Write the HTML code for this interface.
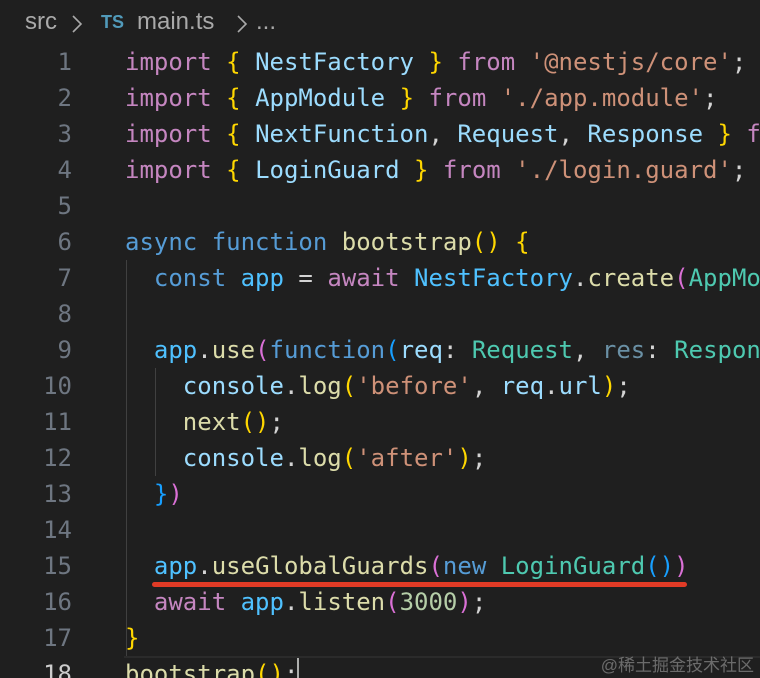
<!DOCTYPE html>
<html><head><meta charset="utf-8"><style>
html,body{margin:0;padding:0;background:#1f1f1f;width:760px;height:678px;overflow:hidden;position:relative}
.bc{position:absolute;top:8px;font:24px "Liberation Sans",sans-serif;color:#a9a9a9;white-space:pre}
.ts{position:absolute;left:101px;top:12px;color:#519aba;font:bold 18px "Liberation Sans",sans-serif}
.ln{position:absolute;left:0;width:72px;text-align:right;font:24px "DejaVu Sans Mono",monospace;color:#6e7681;line-height:36px}
.cl{position:absolute;left:125px;font:24px "DejaVu Sans Mono",monospace;color:#d4d4d4;line-height:36px;white-space:pre;width:635px;overflow:hidden}
.k{color:#c586c0}.b{color:#ffd700}.p{color:#da70d6}.u{color:#179fff}
.v{color:#9cdcfe}.s{color:#ce9178}.f{color:#dcdcaa}.kw{color:#569cd6}.t{color:#4ec9b0}.n{color:#b5cea8}.d{color:#9cdcfe;opacity:.6}
.g{position:absolute;width:1px;background:#404040}
</style></head><body>
<div class="bc" style="left:25px">src</div>
<svg style="position:absolute;left:70px;top:13px" width="14" height="22"><path d="M3 3 L11 11 L3 19" fill="none" stroke="#a9a9a9" stroke-width="1.6"/></svg>
<div class="ts">TS</div>
<div class="bc" style="left:137px">main.ts</div>
<svg style="position:absolute;left:235px;top:13px" width="14" height="22"><path d="M3 3 L11 11 L3 19" fill="none" stroke="#a9a9a9" stroke-width="1.6"/></svg>
<div class="bc" style="left:256px">...</div>

<div class="g" style="left:126px;top:260px;height:396px"></div>
<div class="g" style="left:155px;top:368px;height:108px"></div>
<div style="position:absolute;left:124px;top:656px;width:636px;height:22px;border-top:2px solid #2b2b2b"></div>

<div class="ln" style="top:44px">1</div>
<div class="ln" style="top:80px">2</div>
<div class="ln" style="top:116px">3</div>
<div class="ln" style="top:152px">4</div>
<div class="ln" style="top:188px">5</div>
<div class="ln" style="top:224px">6</div>
<div class="ln" style="top:260px">7</div>
<div class="ln" style="top:296px">8</div>
<div class="ln" style="top:332px">9</div>
<div class="ln" style="top:368px">10</div>
<div class="ln" style="top:404px">11</div>
<div class="ln" style="top:440px">12</div>
<div class="ln" style="top:476px">13</div>
<div class="ln" style="top:512px">14</div>
<div class="ln" style="top:548px">15</div>
<div class="ln" style="top:584px">16</div>
<div class="ln" style="top:620px">17</div>
<div class="ln" style="top:656px;color:#ccc">18</div>

<div class="cl" style="top:44px"><span class="k">import</span> <span class="b">{</span> <span class="v">NestFactory</span> <span class="b">}</span> <span class="k">from</span> <span class="s">'@nestjs/core'</span>;</div>
<div class="cl" style="top:80px"><span class="k">import</span> <span class="b">{</span> <span class="v">AppModule</span> <span class="b">}</span> <span class="k">from</span> <span class="s">'./app.module'</span>;</div>
<div class="cl" style="top:116px"><span class="k">import</span> <span class="b">{</span> <span class="v">NextFunction</span>, <span class="v">Request</span>, <span class="v">Response</span> <span class="b">}</span> <span class="k">from</span></div>
<div class="cl" style="top:152px"><span class="k">import</span> <span class="b">{</span> <span class="v">LoginGuard</span> <span class="b">}</span> <span class="k">from</span> <span class="s">'./login.guard'</span>;</div>
<div class="cl" style="top:224px"><span class="kw">async</span> <span class="kw">function</span> <span class="f">bootstrap</span><span class="b">()</span> <span class="b">{</span></div>
<div class="cl" style="top:260px">  <span class="kw">const</span> <span class="v" style="color:#4fc1ff">app</span> = <span class="k">await</span> <span class="v" style="color:#4fc1ff">NestFactory</span>.<span class="f">create</span><span class="p">(</span><span class="t">AppModule</span></div>
<div class="cl" style="top:332px">  <span class="v" style="color:#4fc1ff">app</span>.<span class="f">use</span><span class="p">(</span><span class="kw">function</span><span class="u">(</span><span class="v">req</span>: <span class="t">Request</span>, <span class="d">res</span>: <span class="t">Response</span></div>
<div class="cl" style="top:368px">    <span class="v">console</span>.<span class="f">log</span><span class="b">(</span><span class="s">'before'</span>, <span class="v">req</span>.<span class="v">url</span><span class="b">)</span>;</div>
<div class="cl" style="top:404px">    <span class="f">next</span><span class="b">()</span>;</div>
<div class="cl" style="top:440px">    <span class="v">console</span>.<span class="f">log</span><span class="b">(</span><span class="s">'after'</span><span class="b">)</span>;</div>
<div class="cl" style="top:476px">  <span class="u">}</span><span class="p">)</span></div>
<div class="cl" style="top:548px">  <span class="v" style="color:#4fc1ff">app</span>.<span class="f">useGlobalGuards</span><span class="p">(</span><span class="kw">new</span> <span class="t">LoginGuard</span><span class="u">()</span><span class="p">)</span></div>
<div class="cl" style="top:584px">  <span class="k">await</span> <span class="v" style="color:#4fc1ff">app</span>.<span class="f">listen</span><span class="p">(</span><span class="n">3000</span><span class="p">)</span>;</div>
<div class="cl" style="top:620px"><span class="b">}</span></div>
<div class="cl" style="top:656px"><span class="f">bootstrap</span><span class="b">()</span>;</div>
<div style="position:absolute;left:297px;top:658px;width:2px;height:24px;background:#aeafad"></div>

<div style="position:absolute;left:152px;top:582px;width:535px;height:5px;border-radius:3px;background:#e13b26"></div>

<div style="position:absolute;right:6px;top:651px;font:17px 'Liberation Sans','Noto Sans CJK SC',sans-serif;color:rgba(200,200,200,.45)">@稀土掘金技术社区</div>
</body></html>
